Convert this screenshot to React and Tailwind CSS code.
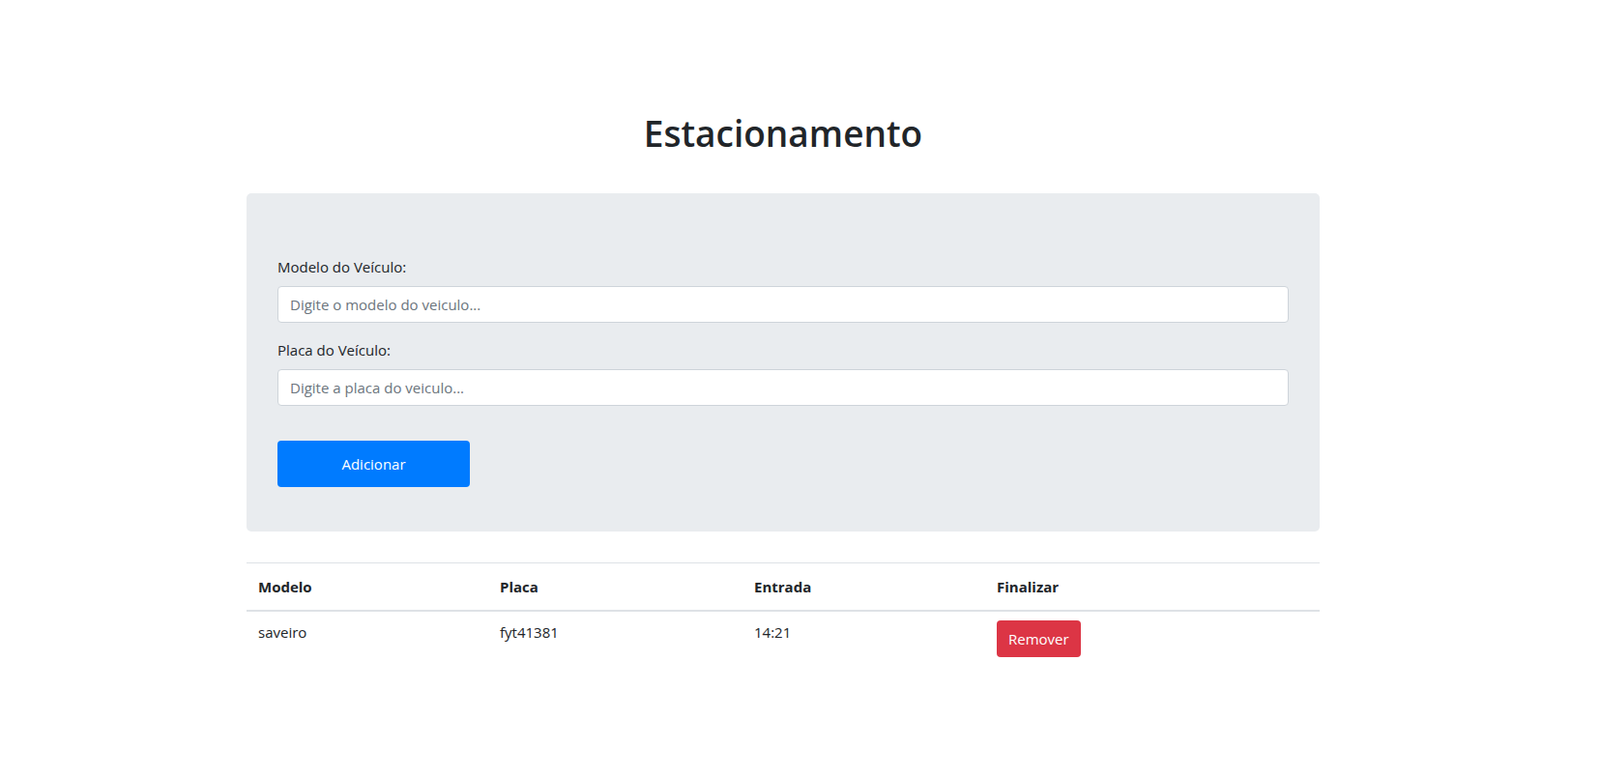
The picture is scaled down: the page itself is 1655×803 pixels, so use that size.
import { useState } from "react";

const App = () => {
  const [modelo, setModelo] = useState("");
  const [placa, setPlaca] = useState("");
  const [veiculos, setVeiculos] = useState([
    { modelo: "saveiro", placa: "fyt41381", entrada: "14:21" },
  ]);

  const handleAdd = () => {
    if (!modelo || !placa) return;
    const now = new Date();
    const entrada = `${String(now.getHours()).padStart(2, "0")}:${String(
      now.getMinutes()
    ).padStart(2, "0")}`;
    setVeiculos((prev) => [...prev, { modelo, placa, entrada }]);
    setModelo("");
    setPlaca("");
  };

  const handleRemove = (index) => {
    setVeiculos((prev) => prev.filter((item, i) => i !== index));
  };

  return (
    <div
      className="w-full min-h-[803px] bg-white text-[#212529] text-[15px] leading-6"
      style={{ fontFamily: '"Open Sans", "Noto Sans", sans-serif' }}
    >
      <div className="ml-[255px] w-[1110px] pt-[114px]">
        <h1 className="text-center text-[37px] leading-[48px] font-semibold text-[#212529]">
          Estacionamento
        </h1>

        {/* Form */}
        <div className="mt-[38px] bg-[#e9ecef] rounded-[5px] px-8 pt-16 pb-[46px]">
          <div className="mb-4">
            <label htmlFor="modelo" className="block mb-2">
              Modelo do Veículo:
            </label>
            <input
              id="modelo"
              type="text"
              value={modelo}
              onChange={(e) => setModelo(e.target.value)}
              placeholder="Digite o modelo do veiculo..."
              className="w-full h-[38px] px-3 bg-white border border-[#ced4da] rounded-[4px] text-[15px] text-[#495057] outline-none placeholder:text-[#6c757d]"
            />
          </div>
          <div>
            <label htmlFor="placa" className="block mb-2">
              Placa do Veículo:
            </label>
            <input
              id="placa"
              type="text"
              value={placa}
              onChange={(e) => setPlaca(e.target.value)}
              placeholder="Digite a placa do veiculo..."
              className="w-full h-[38px] px-3 bg-white border border-[#ced4da] rounded-[4px] text-[15px] text-[#495057] outline-none placeholder:text-[#6c757d]"
            />
          </div>
          <button
            onClick={handleAdd}
            className="mt-9 w-[199px] h-[48px] bg-[#007bff] text-white text-[15px] rounded-[4px]"
          >
            Adicionar
          </button>
        </div>

        {/* Table */}
        <table className="mt-8 w-full border-collapse text-left table-fixed">
          <thead>
            <tr className="border-t border-[#dee2e6]">
              <th className="w-[250px] px-3 py-3 font-bold border-b-2 border-[#dee2e6]">
                Modelo
              </th>
              <th className="w-[263px] px-3 py-3 font-bold border-b-2 border-[#dee2e6]">
                Placa
              </th>
              <th className="w-[251px] px-3 py-3 font-bold border-b-2 border-[#dee2e6]">
                Entrada
              </th>
              <th className="px-3 py-3 font-bold border-b-2 border-[#dee2e6]">
                Finalizar
              </th>
            </tr>
          </thead>
          <tbody>
            {veiculos.map((item, index) => (
              <tr key={index}>
                <td className="px-3 pt-[9px] pb-3 align-top">{item.modelo}</td>
                <td className="px-3 pt-[9px] pb-3 align-top">{item.placa}</td>
                <td className="px-3 pt-[9px] pb-3 align-top">{item.entrada}</td>
                <td className="px-3 pt-[9px] pb-3 align-top">
                  <button
                    onClick={() => handleRemove(index)}
                    className="h-[38px] px-3 bg-[#dc3545] text-white text-[15px] rounded-[4px]"
                  >
                    Remover
                  </button>
                </td>
              </tr>
            ))}
          </tbody>
        </table>
      </div>
    </div>
  );
};

export default App;
